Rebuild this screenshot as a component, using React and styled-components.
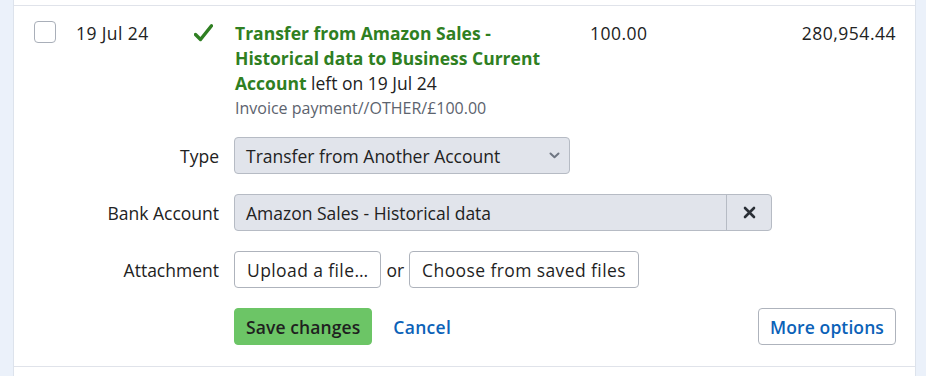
import React from 'react';
import styled, { createGlobalStyle } from 'styled-components';

const GlobalStyle = createGlobalStyle`
  html, body {
    margin: 0;
    padding: 0;
    background: #ebf1fa;
    font-family: "Open Sans", "Liberation Sans", sans-serif;
    color: #222;
  }
`;

const Page = styled.div`
  width: 926px;
  height: 376px;
  overflow: hidden;
  padding: 0 10px 0 13px;
  box-sizing: border-box;
`;

const Panel = styled.div`
  background: #fff;
  border-left: 1px solid #dde3ec;
  border-right: 1px solid #dde3ec;
  height: 100%;
  padding-top: 5px;
  box-sizing: border-box;
`;

const Item = styled.div`
  border-top: 1px solid #e0e3ea;
  border-bottom: 1px solid #e0e3ea;
  padding: 15px 19px 21px 20px;
`;

const TxRow = styled.div`
  display: grid;
  grid-template-columns: 42px 118px 41px 355px 1fr auto;
  align-items: start;
  font-size: 17.5px;
  line-height: 25px;
`;

const Checkbox = styled.span`
  display: block;
  width: 20px;
  height: 20px;
  border: 1px solid #a9afb9;
  border-radius: 4px;
  background: #fff;
`;

const DateCell = styled.div`
  color: #222;
  letter-spacing: 0.4px;
`;

const CheckCell = styled.div`
  padding-top: 3px;
  svg { display: block; }
`;

const Desc = styled.div`
  line-height: 25px;
  padding-right: 36px;
`;

const Title = styled.span`
  color: #2f7f22;
  font-weight: 700;
`;

const Note = styled.div`
  color: #5c636e;
  font-size: 16px;
  line-height: 25px;
`;

const Amount = styled.div`
  text-align: ${p => (p.$right ? 'right' : 'left')};
  letter-spacing: 0.5px;
`;

const Form = styled.div`
  display: grid;
  grid-template-columns: 185px 1fr;
  column-gap: 15px;
  row-gap: 20px;
  margin-top: 16px;
  align-items: center;
  font-size: 17.5px;
`;

const Label = styled.div`
  text-align: right;
  color: #222;
`;

const Field = styled.div`
  display: flex;
  align-items: center;
  gap: 5px;
`;

const Select = styled.div`
  box-sizing: border-box;
  height: 37px;
  width: ${p => p.$width}px;
  display: flex;
  align-items: center;
  background: #e1e4eb;
  border: 1px solid #b6bbc4;
  border-radius: 4px;
  color: #222;
`;

const SelectText = styled.span`
  flex: 1;
  padding-left: 11px;
`;

const Chevron = styled.span`
  width: 30px;
  display: flex;
  justify-content: center;
  svg { display: block; }
`;

const ClearBtn = styled.span`
  width: 44px;
  height: 100%;
  border-left: 1px solid #b6bbc4;
  display: flex;
  align-items: center;
  justify-content: center;
`;

const Button = styled.button`
  box-sizing: border-box;
  height: 37px;
  padding: 0 ${p => (p.$plain ? 12 : 11)}px;
  border-radius: 4px;
  font-family: inherit;
  font-size: 17.5px;
  letter-spacing: ${p => (p.$plain ? '0.4px' : '0.1px')};
  cursor: pointer;
  background: ${p => (p.$primary ? '#6cc566' : '#fff')};
  border: 1px solid ${p => (p.$primary ? '#6cc566' : '#aeb3bc')};
  color: ${p => (p.$blue ? '#0b62b8' : '#1f1f1f')};
  font-weight: ${p => (p.$plain ? 500 : 600)};
`;

const Or = styled.span`
  color: #222;
`;

const Actions = styled.div`
  display: flex;
  align-items: center;
  gap: 21px;
`;

const LinkButton = styled.a`
  color: #0b62b8;
  font-weight: 600;
  letter-spacing: 0.3px;
  text-decoration: none;
`;

const Spacer = styled.div`
  flex: 1;
`;

const CheckIcon = () => (
  <svg width="19" height="18" viewBox="0 0 19 18">
    <path d="M1.5 10.5 L6.5 15.5 L17.5 1.8" fill="none" stroke="#2f7f22" strokeWidth="3.4" strokeLinecap="round" strokeLinejoin="round" />
  </svg>
);

const ChevronIcon = () => (
  <svg width="11" height="7" viewBox="0 0 11 7">
    <path d="M1.5 1.5 L5.5 5.2 L9.5 1.5" fill="none" stroke="#6f7682" strokeWidth="2" strokeLinecap="round" strokeLinejoin="round" />
  </svg>
);

const XIcon = () => (
  <svg width="13" height="13" viewBox="0 0 13 13">
    <path d="M2 2 L11 11 M11 2 L2 11" stroke="#2a2f36" strokeWidth="2.6" strokeLinecap="round" />
  </svg>
);

export default function App() {
  return (
    <Page>
      <GlobalStyle />
      <Panel>
        <Item>
          <TxRow>
            <Checkbox />
            <DateCell>19 Jul 24</DateCell>
            <CheckCell><CheckIcon /></CheckCell>
            <Desc>
              <Title>Transfer from Amazon Sales - Historical data to Business Current Account</Title> left on 19 Jul 24
              <Note>Invoice payment//OTHER/£100.00</Note>
            </Desc>
            <Amount>100.00</Amount>
            <Amount $right>280,954.44</Amount>
          </TxRow>
          <Form>
            <Label>Type</Label>
            <Field>
              <Select $width={336}>
                <SelectText>Transfer from Another Account</SelectText>
                <Chevron><ChevronIcon /></Chevron>
              </Select>
            </Field>
            <Label>Bank Account</Label>
            <Field>
              <Select $width={538}>
                <SelectText>Amazon Sales - Historical data</SelectText>
                <ClearBtn><XIcon /></ClearBtn>
              </Select>
            </Field>
            <Label>Attachment</Label>
            <Field>
              <Button $plain>Upload a file…</Button>
              <Or>or</Or>
              <Button $plain>Choose from saved files</Button>
            </Field>
            <div />
            <Actions>
              <Button $primary>Save changes</Button>
              <LinkButton href="#">Cancel</LinkButton>
              <Spacer />
              <Button $blue>More options</Button>
            </Actions>
          </Form>
        </Item>
      </Panel>
    </Page>
  );
}
